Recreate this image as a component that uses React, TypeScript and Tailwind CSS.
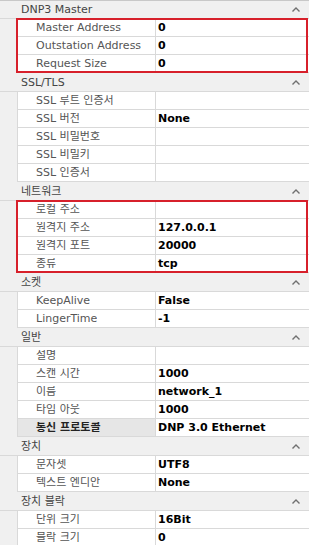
import React from 'react';

type Row = { label: string; value: string; selected?: boolean };
type Section = { title: string; boxed?: boolean; rows: Row[] };

const sections: Section[] = [
  {
    title: 'DNP3 Master',
    boxed: true,
    rows: [
      { label: 'Master Address', value: '0' },
      { label: 'Outstation Address', value: '0' },
      { label: 'Request Size', value: '0' },
    ],
  },
  {
    title: 'SSL/TLS',
    rows: [
      { label: 'SSL 루트 인증서', value: '' },
      { label: 'SSL 버전', value: 'None' },
      { label: 'SSL 비밀번호', value: '' },
      { label: 'SSL 비밀키', value: '' },
      { label: 'SSL 인증서', value: '' },
    ],
  },
  {
    title: '네트워크',
    boxed: true,
    rows: [
      { label: '로컬 주소', value: '' },
      { label: '원격지 주소', value: '127.0.0.1' },
      { label: '원격지 포트', value: '20000' },
      { label: '종류', value: 'tcp' },
    ],
  },
  {
    title: '소켓',
    rows: [
      { label: 'KeepAlive', value: 'False' },
      { label: 'LingerTime', value: '-1' },
    ],
  },
  {
    title: '일반',
    rows: [
      { label: '설명', value: '' },
      { label: '스캔 시간', value: '1000' },
      { label: '이름', value: 'network_1' },
      { label: '타임 아웃', value: '1000' },
      { label: '통신 프로토콜', value: 'DNP 3.0 Ethernet', selected: true },
    ],
  },
  {
    title: '장치',
    rows: [
      { label: '문자셋', value: 'UTF8' },
      { label: '텍스트 엔디안', value: 'None' },
    ],
  },
  {
    title: '장치 블락',
    rows: [
      { label: '단위 크기', value: '16Bit' },
      { label: '블락 크기', value: '0' },
    ],
  },
];

const Caret = () => (
  <svg width="8" height="5" viewBox="0 0 8 5" className="mr-[9px]">
    <path d="M0.5 4.5 L4 1 L7.5 4.5" fill="none" stroke="#707070" strokeWidth="1.4" />
  </svg>
);

const PropRow = ({ row }: { row: Row }) => (
  <div className="flex h-[18px] bg-[#f0f0f0]">
    <div className="w-[17px] shrink-0" />
    <div
      className={`flex w-[138px] shrink-0 items-center border-b border-l border-[#d9d9d9] pl-[18px] ${
        row.selected ? 'bg-[#e6e6e6] font-bold text-[#222]' : 'bg-white text-[#555]'
      }`}
    >
      <span className="truncate">{row.label}</span>
    </div>
    <div className="flex flex-1 items-center border-b border-l border-[#d9d9d9] bg-white pl-[2px] font-bold text-black">
      {row.value}
    </div>
  </div>
);

export default function App() {
  return (
    <div className="h-[545px] w-[309px] overflow-hidden border-t border-[#c8c8c8] bg-[#f0f0f0] font-['DejaVu_Sans','Noto_Sans_CJK_KR',sans-serif] text-[11px] leading-none">
      {sections.map((s, i) => (
        <div key={s.title}>
          <div
            className={`flex items-center justify-between border-b border-[#d9d9d9] bg-[#f0f0f0] pl-[21px] text-[#444] ${
              i === 0 ? 'h-[18px]' : 'h-[19px]'
            }`}
          >
            <span>{s.title}</span>
            <Caret />
          </div>
          <div className="relative">
            {s.rows.map((r) => (
              <PropRow key={r.label} row={r} />
            ))}
            {s.boxed && (
              <div className="pointer-events-none absolute -top-[1px] bottom-0 left-[16px] right-[1px] border-2 border-[#d7202b]" />
            )}
          </div>
        </div>
      ))}
    </div>
  );
}
